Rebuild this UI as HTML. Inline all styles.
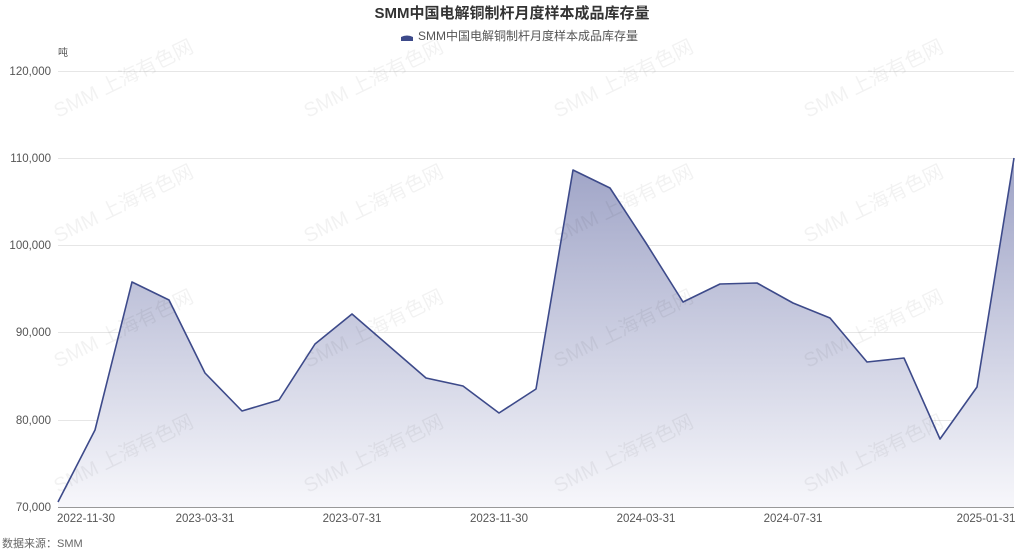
<!DOCTYPE html>
<html><head><meta charset="utf-8"><style>
html,body{margin:0;padding:0;background:#fff;}
svg{display:block;font-family:"Liberation Sans","Noto Sans CJK SC",sans-serif;}
</style></head><body>
<svg width="1024" height="551" viewBox="0 0 1024 551" xmlns="http://www.w3.org/2000/svg">
<defs>
<linearGradient id="g" x1="0" y1="0" x2="0" y2="1">
<stop offset="0" stop-color="#9ea3c6"/>
<stop offset="1" stop-color="#f7f7fb"/>
</linearGradient>
</defs>
<text x="512" y="18" text-anchor="middle" font-size="15" font-weight="bold" fill="#333">SMM中国电解铜制杆月度样本成品库存量</text>
<path d="M401 37 q6 -3 12 0 l0 4 l-12 0z" fill="#3d4a8a"/>
<text x="418" y="40" font-size="12" fill="#555">SMM中国电解铜制杆月度样本成品库存量</text>
<text x="58" y="56" font-size="10" fill="#555">吨</text>
<g stroke="#e6e6e6" stroke-width="1">
<line x1="58" y1="71.5" x2="1014" y2="71.5"/>
<line x1="58" y1="158.5" x2="1014" y2="158.5"/>
<line x1="58" y1="245.5" x2="1014" y2="245.5"/>
<line x1="58" y1="332.5" x2="1014" y2="332.5"/>
<line x1="58" y1="420.5" x2="1014" y2="420.5"/>
</g>
<g font-size="11.5" fill="#555" text-anchor="end">
<text x="51" y="75">120,000</text>
<text x="51" y="162">110,000</text>
<text x="51" y="249">100,000</text>
<text x="51" y="336">90,000</text>
<text x="51" y="424">80,000</text>
<text x="51" y="511">70,000</text>
</g>
<path d="M58 502 L95 430 L132 282 L169 300 L205 373 L242 411 L279 400 L315 344 L352 314 L389 346 L426 378 L463 386 L499 413 L536 389 L573 170 L610 188 L646 243 L683 302 L720 284 L757 283 L793 303 L830 318 L867 362 L904 358 L940 439 L977 387 L1014 158 L1014 507 L58 507Z" fill="url(#g)"/>
<g font-size="20" fill="#000" fill-opacity="0.05">
<text transform="translate(58,118) rotate(-26)">SMM 上海有色网</text>
<text transform="translate(308,118) rotate(-26)">SMM 上海有色网</text>
<text transform="translate(558,118) rotate(-26)">SMM 上海有色网</text>
<text transform="translate(808,118) rotate(-26)">SMM 上海有色网</text>
<text transform="translate(58,243) rotate(-26)">SMM 上海有色网</text>
<text transform="translate(308,243) rotate(-26)">SMM 上海有色网</text>
<text transform="translate(558,243) rotate(-26)">SMM 上海有色网</text>
<text transform="translate(808,243) rotate(-26)">SMM 上海有色网</text>
<text transform="translate(58,368) rotate(-26)">SMM 上海有色网</text>
<text transform="translate(308,368) rotate(-26)">SMM 上海有色网</text>
<text transform="translate(558,368) rotate(-26)">SMM 上海有色网</text>
<text transform="translate(808,368) rotate(-26)">SMM 上海有色网</text>
<text transform="translate(58,493) rotate(-26)">SMM 上海有色网</text>
<text transform="translate(308,493) rotate(-26)">SMM 上海有色网</text>
<text transform="translate(558,493) rotate(-26)">SMM 上海有色网</text>
<text transform="translate(808,493) rotate(-26)">SMM 上海有色网</text>
</g>
<path d="M58 502 L95 430 L132 282 L169 300 L205 373 L242 411 L279 400 L315 344 L352 314 L389 346 L426 378 L463 386 L499 413 L536 389 L573 170 L610 188 L646 243 L683 302 L720 284 L757 283 L793 303 L830 318 L867 362 L904 358 L940 439 L977 387 L1014 158" fill="none" stroke="#3d4a8a" stroke-width="1.6" stroke-linejoin="round"/>
<line x1="58" y1="507.5" x2="1014" y2="507.5" stroke="#999" stroke-width="1"/>
<g font-size="11.5" fill="#555" text-anchor="middle">
<text x="86" y="522">2022-11-30</text>
<text x="205" y="522">2023-03-31</text>
<text x="352" y="522">2023-07-31</text>
<text x="499" y="522">2023-11-30</text>
<text x="646" y="522">2024-03-31</text>
<text x="793" y="522">2024-07-31</text>
<text x="986" y="522">2025-01-31</text>
</g>
<text x="2" y="547" font-size="11" fill="#666">数据来源：SMM</text>
</svg>
</body></html>
